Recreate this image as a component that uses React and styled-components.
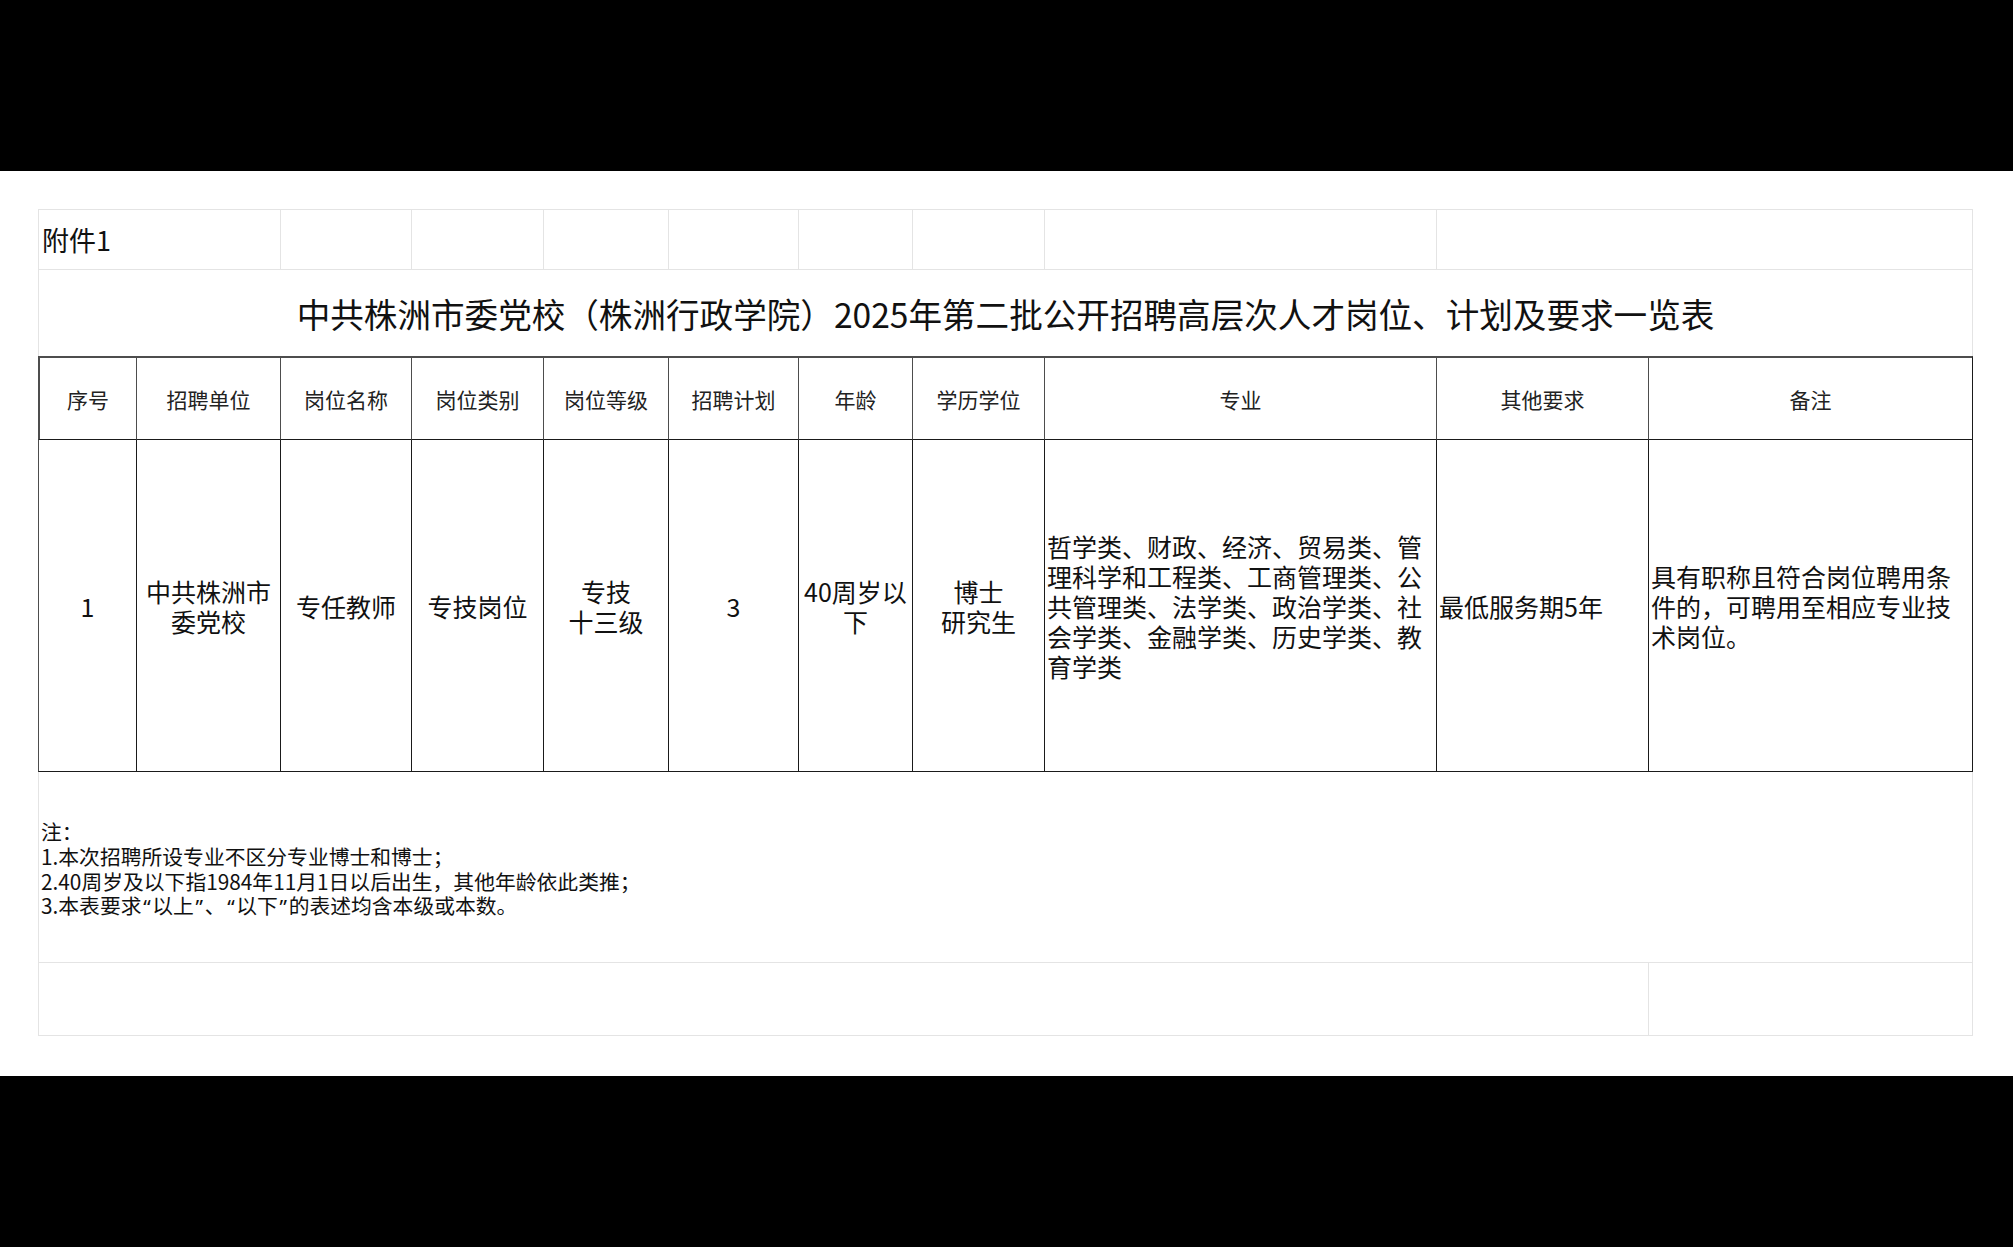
import React from "react";
import styled, { createGlobalStyle } from "styled-components";

const GlobalStyle = createGlobalStyle`
  *, *::before, *::after { box-sizing: border-box; }
  html, body { margin: 0; padding: 0; background: #000; }
  body { font-family: "Noto Sans CJK SC", "Noto Sans", sans-serif; color: #111; }
`;

const Page = styled.div`
  padding: 171px 0;
  background: #000;
`;

const Sheet = styled.div`
  background: #fff;
  padding: 38px 40px 40px 38px;
  height: 905px;
`;

const Table = styled.table`
  width: 1935px;
  table-layout: fixed;
  border-collapse: separate;
  border-spacing: 0;
`;

const LIGHT = "#e4e4e4";
const DARK = "#1a1a1a";
const HEAD = "#4d4d4d";

const Row = styled.tr`
  height: ${(p) => p.$h}px;
`;

const GridCell = styled.td`
  padding: 0 3px;
  vertical-align: middle;
  border-right: 1px solid ${LIGHT};
  border-bottom: ${(p) => (p.$noBottom ? "none" : `1px solid ${LIGHT}`)};
  border-top: ${(p) => (p.$top ? `1px solid ${LIGHT}` : "none")};
  border-left: ${(p) => (p.$first ? `1px solid ${LIGHT}` : "none")};
`;

const Caption = styled(GridCell)`
  font-size: 27px;
  line-height: 32px;
  text-align: left;
  padding-left: 3px;
`;

const Title = styled(GridCell)`
  font-size: 33.6px;
  line-height: 40px;
  text-align: center;
  padding-top: 2px;
`;

const HeadCell = styled.th`
  font-weight: 400;
  font-size: 21px;
  line-height: 26px;
  color: #222;
  text-align: center;
  vertical-align: middle;
  padding: 0 3px;
  border-top: 2px solid ${HEAD};
  border-right: 1px solid ${(p) => (p.$last ? DARK : HEAD)};
  border-bottom: 1px solid ${DARK};
  border-left: ${(p) => (p.$first ? `2px solid ${HEAD}` : "none")};
`;

const DataCell = styled.td`
  font-size: 25px;
  line-height: 30px;
  text-align: ${(p) => p.$align || "center"};
  vertical-align: middle;
  padding: 0 ${(p) => (p.$align === "left" ? "2px" : "3px")};
  border-right: 1px solid ${DARK};
  border-bottom: 1px solid ${DARK};
  border-left: ${(p) => (p.$first ? `1px solid ${HEAD}` : "none")};
`;

const Notes = styled(GridCell)`
  font-size: 20.8px;
  line-height: 24.6px;
  text-align: left;
  padding-left: 2px;
  padding-top: 4px;
`;

const NoteLine = styled.div`
  white-space: nowrap;
`;

const Quote = styled.span`
  font-family: "Noto Sans", sans-serif;
  padding: 0 0.08em;
`;

const widths = [99, 144, 131, 132, 125, 130, 114, 132, 392, 212, 324];

const headers = [
  "序号",
  "招聘单位",
  "岗位名称",
  "岗位类别",
  "岗位等级",
  "招聘计划",
  "年龄",
  "学历学位",
  "专业",
  "其他要求",
  "备注",
];

export default function App() {
  return (
    <>
      <GlobalStyle />
      <Page>
        <Sheet>
          <Table>
            <colgroup>
              {widths.map((w, i) => (
                <col key={i} style={{ width: w }} />
              ))}
            </colgroup>
            <tbody>
              <Row $h={61}>
                <Caption colSpan={2} $top $first>
                  附件1
                </Caption>
                {[2, 3, 4, 5, 6, 7, 8].map((i) => (
                  <GridCell key={i} $top />
                ))}
                <GridCell colSpan={2} $top />
              </Row>
              <Row $h={86}>
                <Title colSpan={11} $first $noBottom>
                  中共株洲市委党校（株洲行政学院）2025年第二批公开招聘高层次人才岗位、计划及要求一览表
                </Title>
              </Row>
              <Row $h={84}>
                {headers.map((h, i) => (
                  <HeadCell key={h} $first={i === 0} $last={i === headers.length - 1}>
                    {h}
                  </HeadCell>
                ))}
              </Row>
              <Row $h={332}>
                <DataCell $first>1</DataCell>
                <DataCell>中共株洲市委党校</DataCell>
                <DataCell>专任教师</DataCell>
                <DataCell>专技岗位</DataCell>
                <DataCell>
                  专技
                  <br />
                  十三级
                </DataCell>
                <DataCell>3</DataCell>
                <DataCell>40周岁以下</DataCell>
                <DataCell>
                  博士
                  <br />
                  研究生
                </DataCell>
                <DataCell $align="left">
                  哲学类、财政、经济、贸易类、管理科学和工程类、工商管理类、公共管理类、法学类、政治学类、社会学类、金融学类、历史学类、教育学类
                </DataCell>
                <DataCell $align="left">最低服务期5年</DataCell>
                <DataCell $align="left">
                  具有职称且符合岗位聘用条件的，可聘用至相应专业技术岗位。
                </DataCell>
              </Row>
              <Row $h={191}>
                <Notes colSpan={11} $first>
                  <NoteLine>注：</NoteLine>
                  <NoteLine>1.本次招聘所设专业不区分专业博士和博士；</NoteLine>
                  <NoteLine>2.40周岁及以下指1984年11月1日以后出生，其他年龄依此类推；</NoteLine>
                  <NoteLine>
                    3.本表要求<Quote>“</Quote>以上<Quote>”</Quote>、<Quote>“</Quote>以下<Quote>”</Quote>的表述均含本级或本数。
                  </NoteLine>
                </Notes>
              </Row>
              <Row $h={73}>
                <GridCell colSpan={10} $first />
                <GridCell />
              </Row>
            </tbody>
          </Table>
        </Sheet>
      </Page>
    </>
  );
}
